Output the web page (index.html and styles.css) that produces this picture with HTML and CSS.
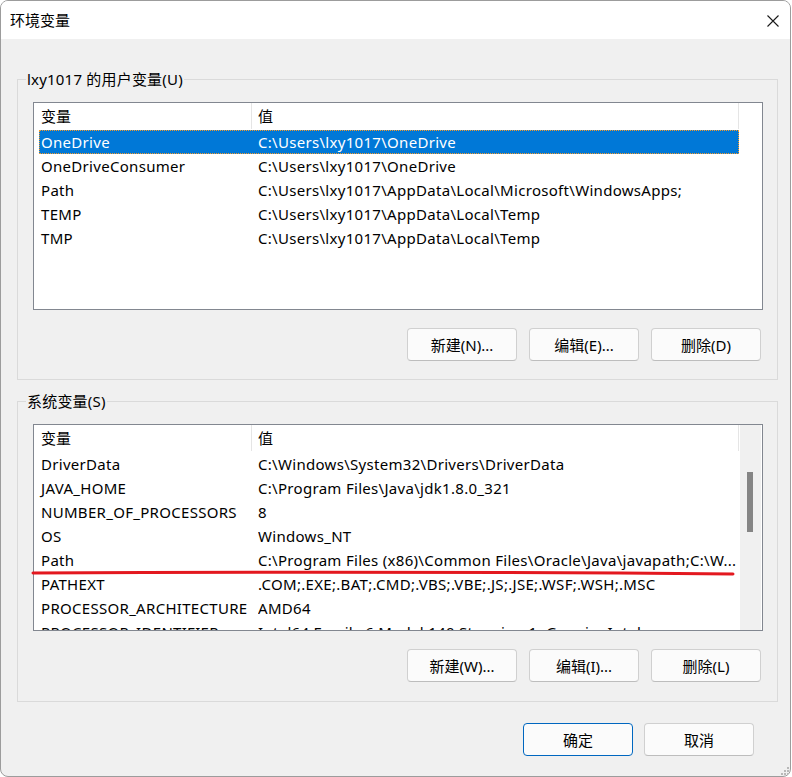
FILE: index.html
```html
<!DOCTYPE html>
<html lang="zh-CN">
<head>
<meta charset="utf-8">
<title>环境变量</title>
<link rel="stylesheet" href="styles.css">
</head>
<body>
<div class="window">
  <div class="titlebar">
    <span class="title">环境变量</span>
    <span class="close">
      <svg width="12" height="12" viewBox="0 0 12 12"><path d="M0.5 0.5L11.5 11.5M11.5 0.5L0.5 11.5" stroke="#1a1a1a" stroke-width="1.1" fill="none"/></svg>
    </span>
  </div>
  <div class="content">
    <fieldset class="group g1">
      <legend>lxy1017 的用户变量(U)</legend>
      <div class="list l1">
        <div class="main">
          <div class="header">
            <div class="hcol c1">变量</div>
            <div class="hcol c2">值</div>
          </div>
          <div class="row selected"><span class="k">OneDrive</span><span class="v">C:\Users\lxy1017\OneDrive</span></div>
          <div class="row"><span class="k">OneDriveConsumer</span><span class="v">C:\Users\lxy1017\OneDrive</span></div>
          <div class="row"><span class="k">Path</span><span class="v">C:\Users\lxy1017\AppData\Local\Microsoft\WindowsApps;</span></div>
          <div class="row"><span class="k">TEMP</span><span class="v">C:\Users\lxy1017\AppData\Local\Temp</span></div>
          <div class="row"><span class="k">TMP</span><span class="v">C:\Users\lxy1017\AppData\Local\Temp</span></div>
        </div>
      </div>
      <div class="buttons">
        <button class="btn">新建(N)...</button>
        <button class="btn">编辑(E)...</button>
        <button class="btn">删除(D)</button>
      </div>
    </fieldset>
    <fieldset class="group g2">
      <legend>系统变量(S)</legend>
      <div class="list l2">
        <div class="main">
          <div class="header">
            <div class="hcol c1">变量</div>
            <div class="hcol c2">值</div>
          </div>
          <div class="row"><span class="k">DriverData</span><span class="v">C:\Windows\System32\Drivers\DriverData</span></div>
          <div class="row"><span class="k">JAVA_HOME</span><span class="v">C:\Program Files\Java\jdk1.8.0_321</span></div>
          <div class="row"><span class="k">NUMBER_OF_PROCESSORS</span><span class="v">8</span></div>
          <div class="row"><span class="k">OS</span><span class="v">Windows_NT</span></div>
          <div class="row"><span class="k">Path</span><span class="v">C:\Program Files (x86)\Common Files\Oracle\Java\javapath;C:\W...</span></div>
          <div class="row"><span class="k">PATHEXT</span><span class="v">.COM;.EXE;.BAT;.CMD;.VBS;.VBE;.JS;.JSE;.WSF;.WSH;.MSC</span></div>
          <div class="row"><span class="k">PROCESSOR_ARCHITECTURE</span><span class="v">AMD64</span></div>
          <div class="row"><span class="k">PROCESSOR_IDENTIFIER</span><span class="v">Intel64 Family 6 Model 140 Stepping 1, GenuineIntel</span></div>
        </div>
        <div class="scrollbar"><div class="thumb"></div></div>
      </div>
      <div class="buttons">
        <button class="btn">新建(W)...</button>
        <button class="btn">编辑(I)...</button>
        <button class="btn">删除(L)</button>
      </div>
    </fieldset>
    <div class="footer">
      <button class="btn primary">确定</button>
      <button class="btn">取消</button>
    </div>
  </div>
  <svg class="redline" width="710" height="10" viewBox="0 0 710 10"><path d="M2 5 Q 350 3 702 6" stroke="#e3181f" stroke-width="3" stroke-linecap="round" fill="none"/></svg>
  <svg class="grip" width="8" height="8" viewBox="0 0 8 8" fill="#b8b8b8"><rect x="6" y="0" width="2" height="2"/><rect x="3" y="3" width="2" height="2"/><rect x="6" y="3" width="2" height="2"/><rect x="0" y="6" width="2" height="2"/><rect x="3" y="6" width="2" height="2"/><rect x="6" y="6" width="2" height="2"/></svg>
</div>
</body>
</html>
```
FILE: styles.css
```css
* { box-sizing: border-box; }
html, body { margin: 0; padding: 0; background: #ffffff; }
body {
  font-family: "Noto Sans", "Noto Sans CJK SC", sans-serif;
  font-size: 15px;
  color: #000;
}
.window {
  position: relative;
  width: 791px;
  height: 777px;
  border: 1px solid #9c9c9c;
  border-radius: 8px;
  background: #f0f0f0;
  overflow: hidden;
  display: flex;
  flex-direction: column;
}
.titlebar {
  height: 38px;
  background: #ffffff;
  display: flex;
  align-items: center;
  justify-content: space-between;
  padding: 0 11px 0 9px;
  flex: none;
}
.title { font-size: 15px; line-height: 20px; }
.close { display: flex; width: 12px; height: 12px; margin-top: 1px; }
.content {
  padding: 30px 0 0 16px;
  display: flex;
  flex-direction: column;
}
.group {
  width: 761px;
  margin: 0;
  border: 1px solid #dadada;
  padding: 13px 14px 18px 15px;
  min-inline-size: 0;
}
.group legend {
  font-size: 15px;
  line-height: 20px;
  padding: 0 1px;
  margin-left: -7px;
  letter-spacing: 0.2px;
}
.g2 { margin-top: 11px; padding-bottom: 19px; }
.list {
  width: 730px;
  border: 1px solid #828790;
  background: #fff;
  display: flex;
  overflow: hidden;
  line-height: 24px;
}
.l1 { height: 208px; }
.l2 { height: 207px; }
.main { width: 706px; flex: none; overflow: hidden; }
.header { display: flex; height: 27px; }
.hcol { height: 26px; line-height: 26px; border-right: 1px solid #e5e5e5; white-space: nowrap; }
.hcol.c1 { width: 218px; padding-left: 7px; }
.hcol.c2 { width: 487px; padding-left: 6px; }
.row {
  display: flex;
  height: 24px;
  width: 700px;
  margin-left: 5px;
  white-space: nowrap;
  letter-spacing: 0.3px;
}
.row .k { width: 219px; padding-left: 2px; flex: none; overflow: hidden; }
.row .v { flex: 1; overflow: hidden; }
.row.selected {
  background: #0078d7;
  color: #fff;
  outline: 1px dotted #f59a2a;
  outline-offset: -1px;
}
.scrollbar {
  width: 21px;
  flex: none;
  background: #f0f0f0;
  padding: 47px 0 0 7px;
}
.thumb { width: 6px; height: 60px; background: #858585; }
.buttons {
  display: flex;
  justify-content: flex-end;
  gap: 12px;
  margin-top: 18px;
  padding-right: 2px;
}
.btn {
  width: 110px;
  height: 33px;
  font-family: inherit;
  font-size: 15px;
  color: #000;
  background: #fbfbfb;
  border: 1px solid #d0d0d0;
  border-bottom-color: #bdbdbd;
  border-radius: 4px;
  padding: 0;
  line-height: 20px;
}
.btn.primary { border: 1px solid #0067c0; }
.footer {
  display: flex;
  justify-content: flex-end;
  gap: 11px;
  margin-top: 21px;
  padding-right: 36px;
}
.redline { position: absolute; left: 30px; top: 567px; }
.grip { position: absolute; right: 1px; bottom: 1px; }
```
